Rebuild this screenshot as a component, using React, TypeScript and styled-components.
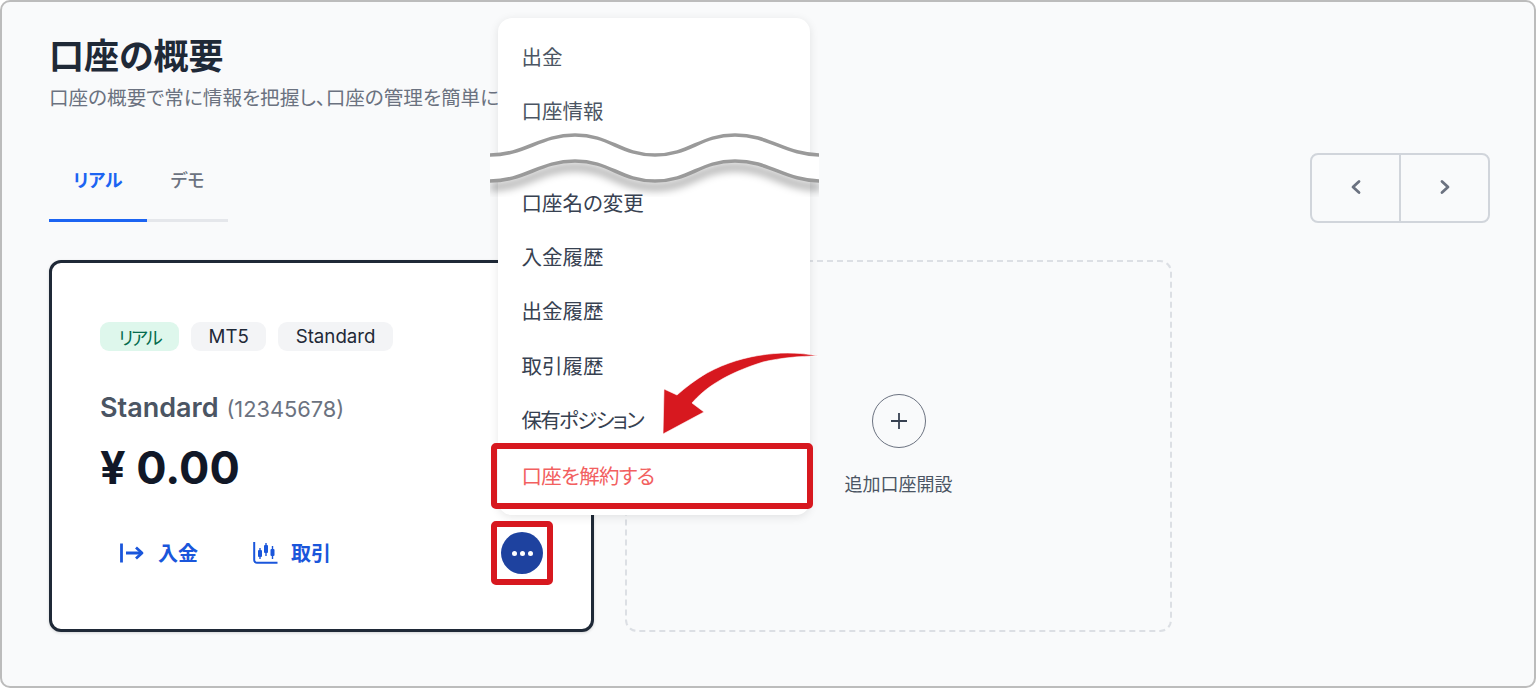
import React from "react";
import styled, { createGlobalStyle } from "styled-components";

const Global = createGlobalStyle`
  html, body { margin: 0; padding: 0; background: #fff; }
  body { font-family: Inter, "Noto Sans CJK JP", sans-serif; font-feature-settings: "palt"; }
  * { box-sizing: border-box; }
`;

const Frame = styled.div`
  position: relative;
  width: 1536px;
  height: 688px;
  overflow: hidden;
  background: #f9fafb;
  border: 2px solid #bcbcbc;
  border-radius: 10px;
  padding: 33px 44px 0 47px;
`;
const Title = styled.h1`
  margin: 0;
  font-size: 35px;
  line-height: 42px;
  font-weight: 700;
  color: #1f2937;
`;
const Subtitle = styled.p`
  margin: 8px 0 0;
  font-size: 19.6px;
  line-height: 26px;
  color: #6b7280;
  white-space: nowrap;
`;
const TabRow = styled.div`
  display: flex;
  justify-content: space-between;
  align-items: flex-start;
  margin-top: 42px;
`;
const Tabs = styled.div`
  display: flex;
  width: 179px;
  border-bottom: 3px solid #e5e7eb;
`;
const Tab = styled.div<{ $active?: boolean }>`
  height: 69px;
  margin-bottom: -3px;
  padding: 0 24px 14px;
  display: flex;
  align-items: center;
  white-space: nowrap;
  font-size: 18px;
  font-weight: ${(p) => (p.$active ? 600 : 500)};
  color: ${(p) => (p.$active ? "#1c64f2" : "#6b7280")};
  border-bottom: 3px solid ${(p) => (p.$active ? "#1c64f2" : "transparent")};
`;
const Pager = styled.div`
  display: flex;
  width: 180px;
  height: 70px;
  border: 2px solid #d1d5db;
  border-radius: 8px;
`;
const PageButton = styled.div<{ $divider?: boolean }>`
  flex: 1;
  display: flex;
  align-items: center;
  justify-content: center;
  padding-bottom: 2px;
  color: #6b7280;
  ${(p) => (p.$divider ? "border-right: 2px solid #d1d5db;" : "")}
`;
const Cards = styled.div`
  display: flex;
  gap: 31px;
  margin-top: 37px;
`;
const AccountCard = styled.div`
  width: 545px;
  height: 372px;
  background: #fff;
  border: 3px solid #1f2937;
  border-radius: 12px;
  padding: 59px 48px 0 48px;
  box-shadow: 0 1px 3px rgba(0, 0, 0, 0.15);
`;
const Chips = styled.div`
  display: flex;
  gap: 12px;
`;
const Chip = styled.span<{ $green?: boolean }>`
  height: 29px;
  padding: 0 ${(p) => (p.$green ? 18.5 : 17.4)}px;
  display: flex;
  align-items: center;
  border-radius: 9px;
  font-size: ${(p) => (p.$green ? 18 : 18.7)}px;
  letter-spacing: ${(p) => (p.$green ? "-2px" : "0")};
  background: ${(p) => (p.$green ? "#def7ec" : "#f3f4f6")};
  color: ${(p) => (p.$green ? "#046c4e" : "#1f2937")};
`;
const AccountName = styled.div`
  margin-top: 39px;
  font-size: 27px;
  line-height: 36px;
  font-weight: 600;
  color: #4b5563;
  span {
    font-size: 21.8px;
    font-weight: 400;
    color: #6b7280;
    margin-left: 1px;
  }
`;
const Balance = styled.div`
  margin-top: 11px;
  font-size: 45px;
  line-height: 60px;
  font-weight: 700;
  color: #111827;
`;
const Actions = styled.div`
  display: flex;
  align-items: center;
  margin-top: 40px;
  padding-left: 20px;
`;
const Action = styled.div<{ $gap: number; $width: number }>`
  display: flex;
  align-items: center;
  gap: ${(p) => p.$gap}px;
  width: ${(p) => p.$width}px;
  font-size: 20px;
  font-weight: 600;
  color: #1a56db;
`;
const AddCard = styled.div`
  width: 547px;
  height: 372px;
  border: 2px dashed #dcdfe4;
  border-radius: 12px;
  display: flex;
  flex-direction: column;
  align-items: center;
  padding: 132px 0 0 0;
`;
const Plus = styled.div`
  width: 54px;
  height: 54px;
  border: 1.5px solid #6b7280;
  border-radius: 50%;
  display: flex;
  align-items: center;
  justify-content: center;
  color: #374151;
`;
const AddLabel = styled.div`
  margin-top: 24px;
  font-size: 18px;
  line-height: 26px;
  color: #4b5563;
`;
const Menu = styled.div`
  position: absolute;
  left: 496px;
  top: 16px;
  width: 312px;
  height: 497px;
  padding: 10.5px 0;
  background: #fff;
  border-radius: 14px;
  box-shadow: 0 2px 10px rgba(0, 0, 0, 0.1);
`;
const MenuItem = styled.div<{ $tone?: "muted" | "danger"; $spacing?: number }>`
  height: 54.2px;
  padding: 0 23.5px;
  display: flex;
  align-items: center;
  font-size: 20.5px;
  letter-spacing: ${(p) => p.$spacing ?? 0}px;
  margin-top: ${(p) => (p.$tone === "danger" ? 2 : 0)}px;
  color: ${(p) => (p.$tone === "danger" ? "#f26060" : p.$tone === "muted" ? "#4b5563" : "#374151")};
`;
const WaveGap = styled.div`
  height: 38px;
`;
const Wave = styled.svg`
  position: absolute;
  left: 488px;
  top: 124px;
`;
const Overlay = styled.svg`
  position: absolute;
  left: 638px;
  top: 338px;
`;
const RedBox = styled.div`
  position: absolute;
  left: 489px;
  top: 441px;
  width: 322px;
  height: 66px;
  border: 6px solid #d7181f;
  border-radius: 5px;
`;
const RedSquare = styled.div`
  position: absolute;
  left: 489px;
  top: 519px;
  width: 62px;
  height: 64px;
  border: 6px solid #d7181f;
  border-radius: 5px;
  background: #fff;
  display: flex;
  align-items: center;
  justify-content: center;
`;
const MoreButton = styled.div`
  width: 42px;
  height: 42px;
  border-radius: 50%;
  background: #1e429f;
  display: flex;
  align-items: center;
  justify-content: center;
  gap: 3px;
`;
const Dot = styled.i`
  width: 5px;
  height: 5px;
  border-radius: 50%;
  background: #fff;
`;

const DepositIcon = () => (
  <svg width="24" height="20" viewBox="0 0 24 20" fill="none" stroke="currentColor" strokeWidth="2.8">
    <path d="M1.5 0.5V19.5" />
    <path d="M6 10H22" />
    <path d="M16 4.5L22 10L16 15.5" strokeLinejoin="round" />
  </svg>
);
const TradeIcon = () => (
  <svg width="25" height="22" viewBox="0 0 25 22" fill="none" stroke="currentColor">
    <path d="M1.2 0V18A2.8 2.8 0 0 0 4 20.8H24.5" strokeWidth="2" />
    <path d="M7 6V17M13 1V14M19.5 4V17" strokeWidth="1.4" />
    <rect x="5" y="8" width="4" height="7" rx="1" fill="currentColor" stroke="none" />
    <rect x="11" y="3" width="4" height="8" rx="1" fill="currentColor" stroke="none" />
    <rect x="17.5" y="7" width="4" height="7" rx="1" fill="currentColor" stroke="none" />
  </svg>
);
const Chevron = ({ d }: { d: string }) => (
  <svg width="12" height="16" viewBox="0 0 12 16" fill="none" stroke="currentColor" strokeWidth="2.8" strokeLinecap="round" strokeLinejoin="round">
    <path d={d} />
  </svg>
);

const WAVE_TOP = "M0 29C35 29 50 9 85 9C120 9 130 29 165 29C200 29 210 9 245 9C280 9 295 29 331 29";
const WAVE_BOTTOM = "M0 55C35 55 50 35 85 35C120 35 130 55 165 55C200 55 210 35 245 35C280 35 295 55 331 55";

export default function App() {
  return (
    <Frame>
      <Global />
      <Title>口座の概要</Title>
      <Subtitle>口座の概要で常に情報を把握し、口座の管理を簡単に</Subtitle>
      <TabRow>
        <Tabs>
          <Tab $active>リアル</Tab>
          <Tab>デモ</Tab>
        </Tabs>
        <Pager>
          <PageButton $divider><Chevron d="M9 2.5L3 8L9 13.5" /></PageButton>
          <PageButton><Chevron d="M3 2.5L9 8L3 13.5" /></PageButton>
        </Pager>
      </TabRow>
      <Cards>
        <AccountCard>
          <Chips>
            <Chip $green>リアル</Chip>
            <Chip>MT5</Chip>
            <Chip>Standard</Chip>
          </Chips>
          <AccountName>Standard <span>(12345678)</span></AccountName>
          <Balance>¥ 0.00</Balance>
          <Actions>
            <Action $gap={14} $width={133}><DepositIcon />入金</Action>
            <Action $gap={13} $width={120}><TradeIcon />取引</Action>
          </Actions>
        </AccountCard>
        <AddCard>
          <Plus>
            <svg width="20" height="20" viewBox="0 0 20 20" stroke="currentColor" strokeWidth="1.8">
              <path d="M10 2V18M2 10H18" />
            </svg>
          </Plus>
          <AddLabel>追加口座開設</AddLabel>
        </AddCard>
      </Cards>
      <Menu>
        <MenuItem $tone="muted">出金</MenuItem>
        <MenuItem $tone="muted">口座情報</MenuItem>
        <WaveGap />
        <MenuItem>口座名の変更</MenuItem>
        <MenuItem>入金履歴</MenuItem>
        <MenuItem>出金履歴</MenuItem>
        <MenuItem>取引履歴</MenuItem>
        <MenuItem $spacing={-1.7}>保有ポジション</MenuItem>
        <MenuItem $tone="danger" $spacing={-0.7}>口座を解約する</MenuItem>
      </Menu>
      <Wave width="329" height="78" viewBox="0 0 329 78" fill="none">
        <defs>
          <filter id="waveBlur" x="-5%" y="-50%" width="110%" height="200%">
            <feGaussianBlur stdDeviation="4" />
          </filter>
          <clipPath id="waveClip">
            <rect width="329" height="78" />
          </clipPath>
        </defs>
        <g clipPath="url(#waveClip)">
          <path d={WAVE_BOTTOM} stroke="#000" strokeOpacity="0.4" strokeWidth="6" transform="translate(0 6)" filter="url(#waveBlur)" />
          <path d={`${WAVE_TOP}L331 55C295 55 280 35 245 35C210 35 200 55 165 55C130 55 120 35 85 35C50 35 35 55 0 55Z`} fill="#fff" />
          <path d={WAVE_TOP} stroke="#9a9a9a" strokeWidth="3.6" />
          <path d={WAVE_BOTTOM} stroke="#9a9a9a" strokeWidth="3.6" />
        </g>
      </Wave>
      <Overlay width="190" height="100" viewBox="640 340 190 100">
        <path
          d="M818 356C790 350 745 352 707 373C695 380 685 388 677 395L664 389L663 434L704 412L692 403C705 388 725 374 763 362C780 358 800 356 818 356Z"
          fill="#d7181f"
          stroke="#fff"
          strokeWidth="0.6"
        />
      </Overlay>
      <RedBox />
      <RedSquare>
        <MoreButton><Dot /><Dot /><Dot /></MoreButton>
      </RedSquare>
    </Frame>
  );
}
